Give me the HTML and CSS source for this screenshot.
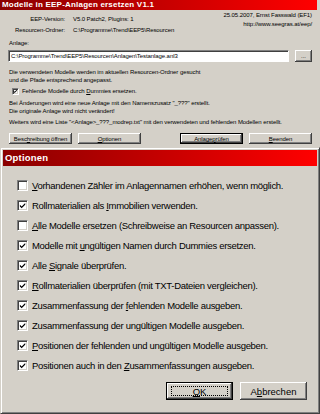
FILE: index.html
```html
<!DOCTYPE html>
<html lang="de">
<head>
    <meta charset="UTF-8">
    <meta name="viewport" content="width=device-width, initial-scale=1.0">
    <title>Modelle in EEP-Anlagen ersetzen</title>
    <link rel="stylesheet" href="styles.css">
</head>
<body>
    <div class="main-win">
        <div class="main-title">Modelle in EEP-Anlagen ersetzen V1.1</div>
        <div class="main-body">
            <div class="head">
                <div class="info">
                    <span class="info-lbl">EEP-Version:</span><span>V5.0 Patch2, Plugins: 1</span>
                    <span class="info-lbl">Resourcen-Ordner:</span><span>C:\Programme\Trend\EEP5\Resourcen</span>
                </div>
                <div class="credits">25.05.2007, Ernst Fasswald (EF1)<br>http://www.seegras.at/eep/</div>
            </div>
            <div class="anlage-lbl">Anlage:</div>
            <div class="file-row">
                <div class="field">C:\Programme\Trend\EEP5\Resourcen\Anlagen\Testanlage.anl3</div>
                <div class="btn btn-dots">...</div>
            </div>
            <p class="note note1">Die verwendeten Modelle werden im aktuellen Resourcen-Ordner gesucht<br>und die Pfade entsprechend angepasst.</p>
            <div class="small-check">
                <span class="box box-small checked">
                    <svg viewBox="0 0 9 9"><path d="M1 3 L3 5 L7 1 L7 3 L3 7 L1 5 Z"/></svg>
                </span>
                <span>Fehlende Modelle durch <u>D</u>ummies ersetzen.</span>
            </div>
            <p class="note note2">Bei Änderungen wird eine neue Anlage mit den Namenszusatz "_???" erstellt.<br>Die originale Anlage wird nicht verändert!</p>
            <p class="note note3">Weiters wird eine Liste "&lt;Anlage&gt;_???_modrep.txt" mit den verwendeten und fehlenden Modellen erstellt.</p>
            <div class="btn-row">
                <div class="btn-group">
                    <div class="btn btn-small">Besc<u>h</u>reibung öffnen</div>
                    <div class="btn btn-small"><u>O</u>ptionen</div>
                </div>
                <div class="btn-group">
                    <div class="btn btn-small btn-default">Anlage <u>p</u>rüfen</div>
                    <div class="btn btn-small"><u>B</u>eenden</div>
                </div>
            </div>
        </div>
    </div>

    <div class="opt-win">
        <div class="opt-title">Optionen</div>
        <div class="opt-list">
            <div class="opt">
                <span class="box"></span>
                <span><u>V</u>orhandenen Zähler im Anlagennamen erhöhen, wenn möglich.</span>
            </div>
            <div class="opt">
                <span class="box"><svg viewBox="0 0 9 9"><path d="M1 3 L3 5 L7 1 L7 3 L3 7 L1 5 Z"/></svg></span>
                <span>Rollmaterialien als <u>I</u>mmobilien verwenden.</span>
            </div>
            <div class="opt">
                <span class="box"></span>
                <span><u>A</u>lle Modelle ersetzen (Schreibweise an Resourcen anpassen).</span>
            </div>
            <div class="opt">
                <span class="box"><svg viewBox="0 0 9 9"><path d="M1 3 L3 5 L7 1 L7 3 L3 7 L1 5 Z"/></svg></span>
                <span>Modelle mit <u>u</u>ngültigen Namen durch Dummies ersetzen.</span>
            </div>
            <div class="opt">
                <span class="box"><svg viewBox="0 0 9 9"><path d="M1 3 L3 5 L7 1 L7 3 L3 7 L1 5 Z"/></svg></span>
                <span>Alle <u>S</u>ignale überprüfen.</span>
            </div>
            <div class="opt">
                <span class="box"><svg viewBox="0 0 9 9"><path d="M1 3 L3 5 L7 1 L7 3 L3 7 L1 5 Z"/></svg></span>
                <span><u>R</u>ollmaterialien überprüfen (mit TXT-Dateien vergleichen).</span>
            </div>
            <div class="opt">
                <span class="box"><svg viewBox="0 0 9 9"><path d="M1 3 L3 5 L7 1 L7 3 L3 7 L1 5 Z"/></svg></span>
                <span>Zusammenfassung der <u>f</u>ehlenden Modelle ausgeben.</span>
            </div>
            <div class="opt">
                <span class="box"><svg viewBox="0 0 9 9"><path d="M1 3 L3 5 L7 1 L7 3 L3 7 L1 5 Z"/></svg></span>
                <span>Zusammenfassung der ungültigen Modelle ausgeben.</span>
            </div>
            <div class="opt">
                <span class="box"><svg viewBox="0 0 9 9"><path d="M1 3 L3 5 L7 1 L7 3 L3 7 L1 5 Z"/></svg></span>
                <span><u>P</u>ositionen der fehlenden und ungültigen Modelle ausgeben.</span>
            </div>
            <div class="opt">
                <span class="box"><svg viewBox="0 0 9 9"><path d="M1 3 L3 5 L7 1 L7 3 L3 7 L1 5 Z"/></svg></span>
                <span>Positionen auch in den <u>Z</u>usammenfassungen ausgeben.</span>
            </div>
        </div>
        <div class="opt-buttons">
            <div class="btn btn-big btn-default"><span class="focus"><u>O</u>K</span></div>
            <div class="btn btn-big">A<u>b</u>brechen</div>
        </div>
    </div>
</body>
</html>
```

FILE: styles.css
```css
body {
    margin: 0;
    width: 320px;
    height: 414px;
    overflow: hidden;
    background-color: #d4d0c8;
    font-family: "Liberation Sans", Arial, sans-serif;
    color: #000;
}
u {
    text-decoration-thickness: 1px;
    text-underline-offset: 1px;
}

/* main window (small, in the back) */
.main-win {
    height: 147px;
    padding-right: 3px;
    font-size: 6px;
    line-height: 8px;
    white-space: nowrap;
}
.main-title {
    height: 10px;
    line-height: 10px;
    padding-left: 2px;
    background: linear-gradient(to right, #8a0000, #ff0000);
    color: #fff;
    font-size: 8px;
    font-weight: bold;
    letter-spacing: 0.2px;
}
.main-body {
    padding: 0 5px 0 9px;
    letter-spacing: -0.08px;
}
.head {
    display: flex;
    justify-content: space-between;
    height: 29px;
}
.info {
    display: grid;
    grid-template-columns: 56px auto;
    column-gap: 8px;
    margin-top: 4px;
    line-height: 11px;
    align-self: flex-start;
}
.info-lbl {
    text-align: right;
}
.credits {
    margin-top: 1px;
    line-height: 9px;
    text-align: right;
}
.anlage-lbl {
    height: 8px;
}
.file-row {
    display: flex;
    gap: 6px;
    height: 12px;
    margin-top: 3px;
    margin-left: -1px;
}
.field {
    flex: 1;
    box-sizing: border-box;
    padding-left: 2px;
    background-color: #fff;
    border: 1px solid;
    border-color: #808080 #fff #fff #808080;
    box-shadow: inset 1px 1px #404040;
    line-height: 10px;
}
.note {
    margin: 0;
}
.note1 {
    margin-top: 6px;
}
.note2,
.note3 {
    margin-top: 3px;
}
.small-check {
    display: flex;
    align-items: center;
    gap: 3px;
    height: 10px;
    margin-top: 2px;
    padding-left: 3px;
}
.btn-row {
    display: flex;
    justify-content: space-between;
    margin-top: 7px;
}
.btn-group {
    display: flex;
    gap: 6px;
}

/* buttons */
.btn {
    box-sizing: border-box;
    display: flex;
    align-items: center;
    justify-content: center;
    background-color: #d4d0c8;
    box-shadow: inset -1px -1px #404040, inset 1px 1px #fff, inset -2px -2px #808080;
}
.btn-dots {
    width: 17px;
    height: 12px;
    line-height: 8px;
}
.btn-small {
    width: 63px;
    height: 11px;
    font-size: 6px;
}
.btn-default {
    border: 1px solid #000;
}
.btn-big {
    width: 67px;
    height: 18px;
    font-size: 9.5px;
}
.focus {
    box-sizing: border-box;
    display: flex;
    align-items: center;
    justify-content: center;
    width: 57px;
    height: 10px;
    border: 1px dotted #000;
}

/* checkbox */
.box {
    box-sizing: border-box;
    display: inline-flex;
    align-items: center;
    justify-content: center;
    flex: none;
    width: 11px;
    height: 11px;
    background-color: #fff;
    border: 1px solid;
    border-color: #808080 #fff #fff #808080;
    box-shadow: inset 1px 1px #404040, inset -1px -1px #d4d0c8;
}
.box svg {
    width: 8px;
    height: 8px;
    fill: #000;
}
.box-small {
    width: 7px;
    height: 7px;
}
.box-small svg {
    width: 5px;
    height: 5px;
}

/* options dialog (front) */
.opt-win {
    box-sizing: border-box;
    display: flex;
    flex-direction: column;
    height: 267px;
    padding: 2px;
    border: 1px solid;
    border-color: #d4d0c8 #404040 #404040 #d4d0c8;
    box-shadow: inset 1px 1px #fff, inset -1px -1px #808080;
    font-size: 9.5px;
    letter-spacing: -0.3px;
}
.opt-title {
    height: 16px;
    line-height: 16px;
    padding-left: 2px;
    background: linear-gradient(to right, #8a0000, #ff0000);
    color: #fff;
    font-weight: bold;
    letter-spacing: 0.2px;
}
.opt-list {
    margin-top: 14px;
    padding-left: 14px;
}
.opt {
    display: flex;
    align-items: center;
    gap: 4px;
    height: 11px;
    margin-bottom: 9px;
}
.opt-buttons {
    display: flex;
    justify-content: flex-end;
    gap: 7px;
    margin-top: auto;
    padding: 0 10px 11px 0;
    letter-spacing: 0;
}
```
